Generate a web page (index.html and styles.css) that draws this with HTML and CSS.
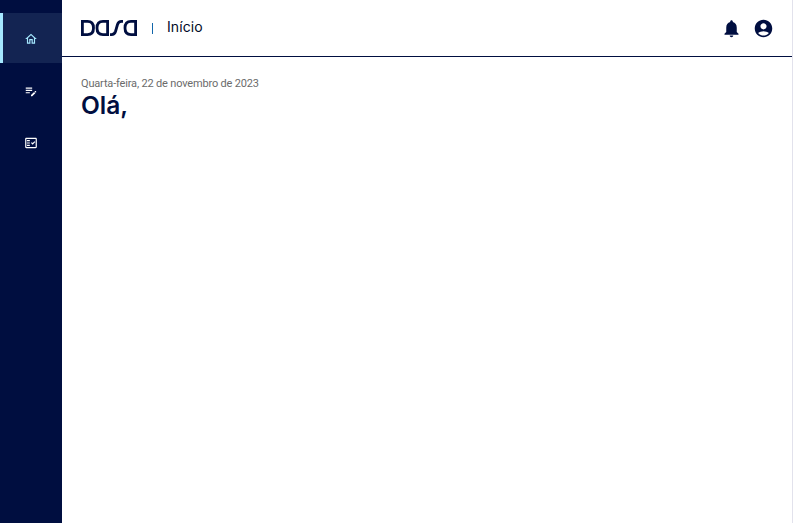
FILE: index.html
```html
<!DOCTYPE html>
<html lang="pt-BR">
<head>
<meta charset="utf-8">
<title>Início</title>
<link rel="stylesheet" href="styles.css">
</head>
<body>
<nav class="sidebar">
  <a class="nav-item active"><svg class="icon" viewBox="0 0 24 24"><path d="M12 5.690l5 4.500V18h-2v-6H9v6H7v-7.810l5-4.500M12 3L2 12h3v8h6v-6h2v6h6v-8h3L12 3z"/></svg></a>
  <a class="nav-item"><svg class="icon" viewBox="0 0 24 24"><path d="M3 10h11v2H3v-2zm0-2h11V6H3v2zm0 8h7v-2H3v2zm15.010-3.130l.71-.71a.996.996 0 0 1 1.410 0l.71.71c.39.39.39 1.020 0 1.410l-.71.71-2.120-2.120zm-.71.71l-5.300 5.300V21h2.120l5.300-5.300-2.120-2.120z"/></svg></a>
  <a class="nav-item"><svg class="icon" viewBox="0 0 24 24"><path fill-rule="evenodd" d="M20 3H4c-1.100 0-2 .9-2 2v14c0 1.100.9 2 2 2h16c1.100 0 2-.9 2-2V5c0-1.100-.9-2-2-2zm0 16H4V5h16v14zM19.410 10.420L17.990 9l-3.170 3.170-1.410-1.420L12 12.160 14.820 15zM5 7h5v2H5zM5 11h5v2H5zM5 15h5v2H5z"/></svg></a>
</nav>
<main class="page">
  <header class="topbar">
    <svg class="logo" viewBox="0 0 56 16" aria-label="Dasa">
      <path d="M1.400 1.400H6.500Q12.500 1.400 12.500 8T6.500 14.600H1.400Z"/>
      <path d="M26.600 1.400H22Q16 1.400 16 8T22 14.600H26.600Z"/>
      <path d="M42 1.400H40.500Q37.500 1.400 36.500 4.500L34.500 11.500Q33.500 14.600 30.500 14.600H29"/>
      <path d="M54.600 1.400H50Q44 1.400 44 8T50 14.600H54.600Z"/>
    </svg>
    <span class="divider"></span>
    <span class="title">Início</span>
    <div class="actions">
      <svg class="action" viewBox="0 0 24 24"><path d="M12 22c1.100 0 2-.9 2-2h-4c0 1.100.89 2 2 2zm6-6v-5c0-3.070-1.640-5.640-4.500-6.320V4c0-.83-.67-1.500-1.500-1.500s-1.500.67-1.500 1.500v.68C7.630 5.360 6 7.920 6 11v5l-2 2v1h16v-1l-2-2z"/></svg>
      <svg class="action" viewBox="0 0 24 24"><path d="M12 2C6.480 2 2 6.480 2 12s4.480 10 10 10 10-4.480 10-10S17.520 2 12 2zm0 4c1.930 0 3.500 1.570 3.500 3.500S13.930 13 12 13s-3.500-1.570-3.500-3.500S10.070 6 12 6zm0 14c-2.030 0-4.430-.82-6.140-2.880C7.550 15.800 9.680 15 12 15s4.450.8 6.140 2.120C16.430 19.180 14.030 20 12 20z"/></svg>
    </div>
  </header>
  <section class="content">
    <p class="date">Quarta-feira, 22 de novembro de 2023</p>
    <h1 class="greeting">Olá,</h1>
  </section>
</main>
</body>
</html>
```
FILE: styles.css
```css
* { box-sizing: border-box; }
body { margin: 0; height: 100vh; display: flex; overflow: hidden; background: #fff; color: #000e40; font-family: "Liberation Sans", sans-serif; }
.sidebar { width: 62px; padding-top: 13px; background: #000e40; display: flex; flex-direction: column; gap: 2px; }
.nav-item { height: 50px; display: flex; align-items: center; justify-content: center; color: #fff; }
.nav-item.active { background: #132452; border-left: 3px solid #a5e8ff; padding-right: 3px; color: #a5e8ff; }
.icon { width: 14px; height: 14px; margin-top: 1px; fill: currentColor; }
.page { flex: 1; border-right: 1px solid #e2e2ec; }
.topbar { height: 57px; border-bottom: 1px solid #000e40; padding: 0 19px; display: flex; align-items: center; }
.logo { width: 56px; height: 16px; fill: none; stroke: #000e40; stroke-width: 2.8; stroke-linejoin: miter; }
.divider { width: 1px; height: 11px; margin: 1px 14px 0 15px; background: #1266aa; }
.title { color: #000a28; font-family: Inter, sans-serif; font-size: 14px; line-height: 18px; letter-spacing: .1px; margin-top: -3px; }
.actions { margin-left: auto; display: flex; gap: 12px; }
.action { width: 21px; height: 21px; fill: #000e40; }
.actions { gap: 11px; margin-right: -1px; }
.content { padding: 20px 19px; }
.date { margin: 0; color: #6b6b6b; font-family: Roboto, sans-serif; font-size: 11px; line-height: 14px; letter-spacing: -.17px; }
.greeting { margin: 0; font-family: Inter, sans-serif; font-size: 24.5px; font-weight: 600; line-height: 28px; }
```
